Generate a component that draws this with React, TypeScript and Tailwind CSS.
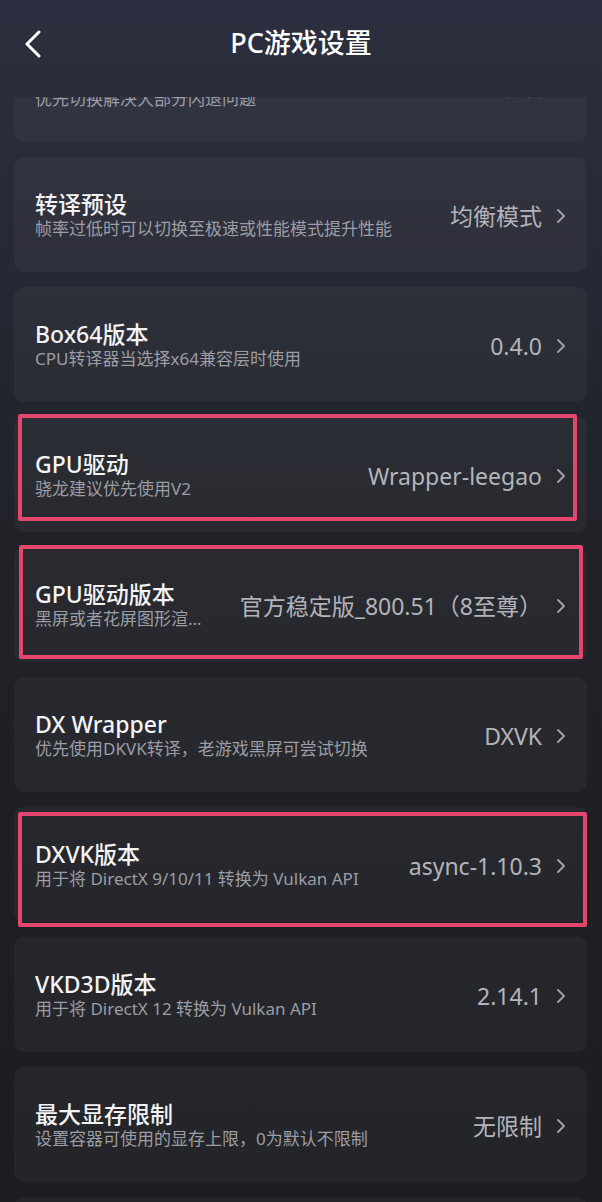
import React from 'react'

type Row = {
  title: string
  desc: string
  value: string
  // pink annotation box drawn over the card
  mark?: string
}

const rows: Row[] = [
  { title: 'Wine版本', desc: '优先切换解决大部分闪退问题', value: '默认' },
  { title: '转译预设', desc: '帧率过低时可以切换至极速或性能模式提升性能', value: '均衡模式' },
  { title: 'Box64版本', desc: 'CPU转译器当选择x64兼容层时使用', value: '0.4.0' },
  { title: 'GPU驱动', desc: '骁龙建议优先使用V2', value: 'Wrapper-leegao', mark: 'top-[-3px] left-[4px] right-[10px] h-[107px]' },
  { title: 'GPU驱动版本', desc: '黑屏或者花屏图形渲染异常时可尝试切换', value: '官方稳定版_800.51（8至尊）', mark: 'top-[-2px] left-[5px] right-[4px] h-[114px]' },
  { title: 'DX Wrapper', desc: '优先使用DKVK转译，老游戏黑屏可尝试切换', value: 'DXVK' },
  { title: 'DXVK版本', desc: '用于将 DirectX 9/10/11 转换为 Vulkan API', value: 'async-1.10.3', mark: 'top-[5px] left-[4px] right-[0px] h-[115px]' },
  { title: 'VKD3D版本', desc: '用于将 DirectX 12 转换为 Vulkan API', value: '2.14.1' },
  { title: '最大显存限制', desc: '设置容器可使用的显存上限，0为默认不限制', value: '无限制' },
  { title: '音频驱动', desc: '游戏无声音时可尝试切换', value: 'PulseAudio' },
]

function Chevron() {
  return (
    <svg width="10" height="16" viewBox="0 0 10 16" fill="none" className="shrink-0">
      <path d="M2 2l6 6-6 6" stroke="#a3a4ab" strokeWidth="1.8" strokeLinecap="round" strokeLinejoin="round" />
    </svg>
  )
}

function SettingCard({ row }: { row: Row }) {
  return (
    <div className="relative h-[115px] shrink-0 rounded-[10px] bg-white/[0.035] pl-[21px] pr-[21px] flex items-center gap-6">
      <div className="flex-1 min-w-0 flex flex-col">
        <div className="text-[23px] leading-[28px] font-medium text-[#f3f3f5] truncate">{row.title}</div>
        <div className="text-[17px] leading-[22px] text-[#9c9da5] truncate">{row.desc}</div>
      </div>
      <div className="shrink-0 flex items-center gap-[14px] pt-[2px]">
        <span className="text-[23px] leading-[28px] text-[#b3b4bb]">{row.value}</span>
        <Chevron />
      </div>
      {row.mark && (
        <div className={`absolute ${row.mark} border-[4px] border-[#e5466d] rounded-[2px] pointer-events-none`} />
      )}
    </div>
  )
}

export default function App() {
  return (
    <div
      className="w-[602px] h-[1202px] overflow-hidden flex flex-col bg-gradient-to-b from-[#2c2f3f] via-[#202228] via-45% to-[#1c1d21]"
      style={{ fontFamily: '"Noto Sans", "Noto Sans CJK SC", sans-serif' }}
    >
      <div className="h-[97px] shrink-0 grid grid-cols-[80px_1fr_80px] items-center">
        <div className="pl-[24px] pb-[10px]">
          <svg width="18" height="28" viewBox="0 0 18 28" fill="none">
            <path d="M15 2L3 14l12 12" stroke="#ffffff" strokeWidth="3" strokeLinecap="round" strokeLinejoin="round" />
          </svg>
        </div>
        <div className="text-center text-[27px] font-medium text-white pb-[10px]">PC游戏设置</div>
        <div />
      </div>
      <div className="flex-1 overflow-hidden px-[14px] pr-[15px]">
        <div className="-mt-[70px] flex flex-col gap-[15px]">
          {rows.map((r) => (
            <SettingCard key={r.title} row={r} />
          ))}
        </div>
      </div>
    </div>
  )
}
